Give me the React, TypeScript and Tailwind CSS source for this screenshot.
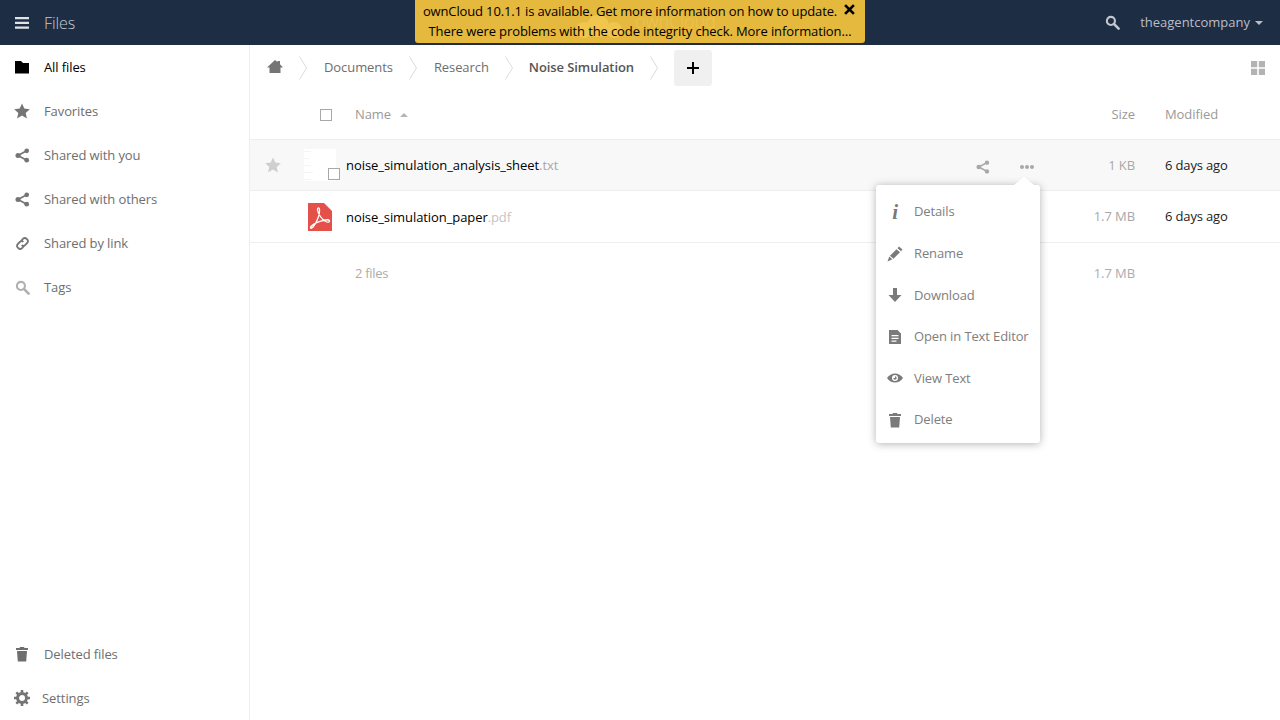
import type { ReactNode } from 'react';

const FONT = "font-['Open_Sans','Noto_Sans',sans-serif]";

type IconProps = { className?: string };

const FolderIcon = ({ className }: IconProps) => (
  <svg viewBox="0 0 16 16" className={className} fill="currentColor">
    <path d="M1 2h6l2 2h6v10.500H1z" />
  </svg>
);
const StarIcon = ({ className }: IconProps) => (
  <svg viewBox="0 0 16 16" className={className} fill="currentColor">
    <path d="M8 .5l2.300 5.100 5.500.6-4.100 3.700 1.200 5.500L8 12.600l-4.900 2.800 1.200-5.500L.2 6.200l5.500-.6z" />
  </svg>
);
const ShareIcon = ({ className }: IconProps) => (
  <svg viewBox="0 0 16 16" className={className} fill="currentColor">
    <circle cx="3.200" cy="8" r="2.700" />
    <circle cx="12.500" cy="3" r="2.500" />
    <circle cx="12.500" cy="13" r="2.500" />
    <path d="M3.200 8l9.300-5M3.200 8l9.300 5" stroke="currentColor" strokeWidth="1.800" fill="none" />
  </svg>
);
const LinkIcon = ({ className }: IconProps) => (
  <svg viewBox="0 0 16 16" className={className} fill="none" stroke="currentColor" strokeWidth="2">
    <path d="M6.500 5.500l1.800-2.300a2.600 2.600 0 0 1 3.900-.3l.8.7a2.600 2.600 0 0 1 .1 3.700l-2.300 2.500a2.600 2.600 0 0 1-3.700 0" />
    <path d="M9.500 10.500l-1.800 2.300a2.600 2.600 0 0 1-3.900.3l-.8-.7a2.600 2.600 0 0 1-.1-3.700l2.300-2.500a2.600 2.600 0 0 1 3.700 0" />
  </svg>
);
const SearchIcon = ({ className }: IconProps) => (
  <svg viewBox="0 0 16 16" className={className} fill="none" stroke="currentColor">
    <circle cx="6.300" cy="6.300" r="4.300" strokeWidth="2.200" />
    <path d="M9.500 9.500l5 5" strokeWidth="2.800" strokeLinecap="round" />
  </svg>
);
const TrashIcon = ({ className }: IconProps) => (
  <svg viewBox="0 0 16 16" className={className} fill="currentColor">
    <path d="M6 1h4l.5 1H14v2H2V2h3.500zM3 5h10l-.8 10.500H3.800z" />
  </svg>
);
const GearIcon = ({ className }: IconProps) => (
  <svg viewBox="0 0 16 16" className={className} fill="none" stroke="currentColor">
    <circle cx="8" cy="8" r="4.500" strokeWidth="3" />
    <path d="M8 0v3M8 13v3M0 8h3M13 8h3M2.300 2.300l2.100 2.100M11.600 11.600l2.100 2.100M2.300 13.700l2.100-2.100M11.600 4.400l2.100-2.100" strokeWidth="2.600" />
  </svg>
);
const HomeIcon = ({ className }: IconProps) => (
  <svg viewBox="0 0 16 16" className={className} fill="currentColor">
    <path d="M8 1l2.500 2V2h2.500v3.300L16 8.500h-2.500V14h-11V8.500H0z" />
  </svg>
);
const Chevron = () => (
  <svg viewBox="0 0 10 24" className="h-6 w-[10px] shrink-0" fill="none" stroke="#dcdcdc" strokeWidth="1">
    <path d="M1.500 .5l7 11.500-7 11.500" />
  </svg>
);
const PdfIcon = () => (
  <svg viewBox="0 0 24 28" className="h-[28px] w-[24px]">
    <path d="M0 0h16l8 8v20H0z" fill="#e4514a" />
    <path
      d="M2.500 25c1.200 1 3.500-1.500 6-6.500 1.800-3.700 3.300-8.500 3-12-.2-2.500-2.300-2-2 .5.500 4 4.500 9.500 8 11.500 2 1 4.500.8 4-.7-.5-1.300-5-1-9.500.5-4 1.300-10 4.700-9.500 6.700z"
      fill="none"
      stroke="#fff"
      strokeWidth="1.300"
    />
  </svg>
);

const MENU: { icon: ReactNode; label: string }[] = [
  {
    icon: <span className="font-['Liberation_Serif',serif] text-[21px] font-bold italic leading-none">i</span>,
    label: 'Details',
  },
  {
    icon: (
      <svg viewBox="0 0 16 16" className="h-4 w-4" fill="currentColor">
        <path d="M12 .5l3.500 3-1.500 1.700-3.500-3zM9.500 3.200l3.500 3-6.500 6.500-3.500-3zM2.300 10.500l3 2.700L.5 15.500z" />
      </svg>
    ),
    label: 'Rename',
  },
  {
    icon: (
      <svg viewBox="0 0 16 16" className="h-4 w-4" fill="currentColor">
        <path d="M6 1h4v7h4.500L8 15 1.500 8H6z" />
      </svg>
    ),
    label: 'Download',
  },
  {
    icon: (
      <svg viewBox="0 0 16 16" className="h-4 w-4" fill="currentColor">
        <path
          fillRule="evenodd"
          d="M2 1h8.500L14 4.500V15H2zM4.500 6v1.200h7V6zm0 2.800V10h7V8.800zm0 2.700v1.200h5v-1.200z"
        />
      </svg>
    ),
    label: 'Open in Text Editor',
  },
  {
    icon: (
      <svg viewBox="0 0 16 16" className="h-4 w-4 -translate-y-px" fill="currentColor">
        <path
          fillRule="evenodd"
          d="M0 8c2-3 5-4.500 8-4.500S14 5 16 8c-2 3-5 4.500-8 4.500S2 11 0 8zm8-3a3 3 0 1 0 0 6 3 3 0 0 0 0-6zm0 1.300a1.700 1.700 0 1 1-1.700 1.700H8z"
        />
      </svg>
    ),
    label: 'View Text',
  },
  { icon: <TrashIcon className="h-4 w-4" />, label: 'Delete' },
];

function NavItem({ icon, label, active }: { icon: ReactNode; label: string; active?: boolean }) {
  return (
    <a className={`flex h-11 items-center text-[13px] tracking-[-0.1px] ${active ? 'text-black' : 'text-[#6e6e6e]'}`}>
      <span className="flex w-11 shrink-0 justify-center">{icon}</span>
      <span className="pt-[2px]">{label}</span>
    </a>
  );
}

function Checkbox({ className }: IconProps) {
  return <span className={`block h-3 w-3 border border-[#a8a8a8] bg-white ${className ?? ''}`} />;
}

export default function App() {
  return (
    <div className={`flex h-[720px] flex-col overflow-hidden bg-white tracking-[-0.08px] ${FONT}`}>
      <header className="relative flex h-[45px] shrink-0 items-center justify-between bg-[#1d2d44]">
        <div className="flex items-center">
          <svg viewBox="0 0 14 12" className="ml-[15px] h-3 w-[14px]" fill="#dfe2e6">
            <path d="M0 0h14v2.200H0zM0 4.800h14V7H0zM0 9.600h14v2.200H0z" />
          </svg>
          <span className="ml-[15px] text-[16px] font-light text-[#c6cbd2]">Files</span>
        </div>
        <div className="flex items-center text-[13px] text-[#b9bec6]">
          <SearchIcon className="h-[15px] w-[15px] text-[#c4c8ce]" />
          <span className="ml-[20px] tracking-normal">theagentcompany</span>
          <span className="ml-[5px] mr-[17px] h-0 w-0 border-x-[4px] border-t-[4px] border-x-transparent border-t-[#b9bec6]" />
        </div>

        <div className="absolute left-[415px] top-0 z-20 h-[43px] w-[450px] rounded-b-[3px] bg-[#e5b83e] text-center text-[13px] leading-[20px] text-black">
          <svg viewBox="0 0 48 23" className="absolute left-[160px] top-[15px] h-[23px] w-[48px]" fill="#f0c64f">
            <circle cx="9" cy="15" r="8" />
            <circle cx="23" cy="11" r="11" />
            <circle cx="39" cy="15" r="8" />
          </svg>
          <span className="absolute left-[220px] top-[11px] text-[18px] font-light text-[#edc452]">ownCloud</span>
          <div className="relative pt-[1px]">
            <div className="pr-[20px] tracking-[-0.14px]">ownCloud 10.1.1 is available. Get more information on how to update.</div>
            <div className="tracking-[-0.11px]">There were problems with the code integrity check. More information…</div>
          </div>
          <svg viewBox="0 0 10 10" className="absolute right-[10px] top-[4px] h-[11px] w-[11px]" stroke="#000" strokeWidth="2.400">
            <path d="M1 1l8 8M9 1l-8 8" />
          </svg>
        </div>
      </header>

      <div className="flex min-h-0 flex-1">
        <aside className="flex w-[250px] shrink-0 flex-col justify-between border-r border-[#eeeeee]">
          <nav>
            <NavItem active label="All files" icon={<FolderIcon className="h-4 w-4 text-black" />} />
            <NavItem label="Favorites" icon={<StarIcon className="h-4 w-4 text-[#757575]" />} />
            <NavItem label="Shared with you" icon={<ShareIcon className="h-[15px] w-[15px] text-[#757575]" />} />
            <NavItem label="Shared with others" icon={<ShareIcon className="h-[15px] w-[15px] text-[#757575]" />} />
            <NavItem label="Shared by link" icon={<LinkIcon className="h-[15px] w-[15px] text-[#757575]" />} />
            <NavItem label="Tags" icon={<SearchIcon className="h-[15px] w-[15px] text-[#b0b0b0]" />} />
          </nav>
          <div>
            <NavItem label="Deleted files" icon={<TrashIcon className="h-4 w-4 text-[#6e6e6e]" />} />
            <a className="flex h-11 items-center text-[13px] text-[#6e6e6e]">
              <span className="flex w-[42px] shrink-0 justify-center pl-[2px]">
                <GearIcon className="h-4 w-4 text-[#757575]" />
              </span>
              <span className="pt-[2px]">Settings</span>
            </a>
          </div>
        </aside>

        <main className="relative min-w-0 flex-1 text-[13px]">
          <div className="flex h-[45px] items-center">
            <HomeIcon className="ml-[17px] h-4 w-4 -translate-y-[1px] text-[#757575]" />
            <span className="ml-[15px]"><Chevron /></span>
            <span className="ml-[16px] text-[#6e6e6e]">Documents</span>
            <span className="ml-[15px]"><Chevron /></span>
            <span className="ml-[16px] text-[#6e6e6e]">Research</span>
            <span className="ml-[15px]"><Chevron /></span>
            <span className="ml-[15px] font-semibold text-[#555555]">Noise Simulation</span>
            <span className="ml-[15px]"><Chevron /></span>
            <button className="ml-[15px] mt-[1px] flex h-9 w-[38px] items-center justify-center rounded-[3px] bg-[#f0f0f0]">
              <svg viewBox="0 0 12 12" className="h-3 w-3" stroke="#000" strokeWidth="2">
                <path d="M6 0v12M0 6h12" />
              </svg>
            </button>
            <svg viewBox="0 0 14 14" className="ml-auto mr-[15px] h-[14px] w-[14px]" fill="#b3b3b3">
              <path d="M0 0h6.200v6.200H0zM7.800 0H14v6.200H7.800zM0 7.800h6.200V14H0zM7.800 7.800H14V14H7.800z" />
            </svg>
          </div>

          <div className="flex h-[50px] items-center border-b border-[#eeeeee] text-[#9a9a9a]">
            <Checkbox className="ml-[70px]" />
            <span className="ml-[23px]">Name</span>
            <span className="ml-[9px] h-0 w-0 border-x-[4px] border-b-[4px] border-x-transparent border-b-[#b5b5b5]" />
            <span className="ml-auto">Size</span>
            <span className="ml-[30px] w-[115px]">Modified</span>
          </div>

          <div className="flex h-[51px] items-center border-b border-[#eeeeee] bg-[#f8f8f8]">
            <StarIcon className="ml-[15px] h-4 w-4 text-[#cfcfcf]" />
            <div className="relative ml-[23px] flex h-8 w-8 shrink-0 flex-col gap-[6px] bg-white pt-[2px]">
              <span className="h-px w-[7px] bg-[#f4f4f4]" />
              <span className="h-px w-[5px] bg-[#f4f4f4]" />
              <span className="h-px w-[7px] bg-[#f4f4f4]" />
              <span className="h-px w-[9px] bg-[#f4f4f4]" />
              <span className="h-px w-[7px] bg-[#f4f4f4]" />
              <Checkbox className="absolute left-6 top-[19px]" />
            </div>
            <span className="ml-[10px] pt-[2px] tracking-[-0.05px] text-black">
              noise_simulation_analysis_sheet<span className="text-[#a8a8a8]">.txt</span>
            </span>
            <ShareIcon className="ml-auto mt-[3px] h-[14px] w-[14px] text-[#a8a8a8]" />
            <svg viewBox="0 0 14 4" className="ml-[30px] mt-[3px] h-1 w-[14px]" fill="#a8a8a8">
              <circle cx="2" cy="2" r="2" />
              <circle cx="7" cy="2" r="2" />
              <circle cx="12" cy="2" r="2" />
            </svg>
            <span className="ml-[74px] pt-[2px] text-[#a8a8a8]">1 KB</span>
            <span className="ml-[30px] w-[115px] pt-[2px] tracking-[-0.15px] text-[#222222]">6 days ago</span>
          </div>

          <div className="flex h-[52px] items-center border-b border-[#eeeeee]">
            <span className="ml-[58px] flex w-6 shrink-0"><PdfIcon /></span>
            <span className="ml-[14px] pt-[2px] text-black">
              noise_simulation_paper<span className="text-[#c4c4c4]">.pdf</span>
            </span>
            <span className="ml-auto text-[#a8a8a8]">1.7 MB</span>
            <span className="ml-[30px] w-[115px] tracking-[-0.15px] text-[#222222]">6 days ago</span>
          </div>

          <div className="flex h-[62px] items-center text-[#ababab]">
            <span className="ml-[105px] tracking-[-0.3px]">2 files</span>
            <span className="ml-auto mr-[145px]">1.7 MB</span>
          </div>

          <div className="absolute left-[626px] top-[140px] z-10 w-[164px] rounded-[3px] bg-white pb-[2px] pt-[6.400px] text-[13px] tracking-[-0.12px] text-[#7e7e7e] shadow-[0_1px_8px_rgba(0,0,0,0.3)]">
            <span className="absolute -top-[8px] left-[138px] h-0 w-0 border-x-[10px] border-b-[8px] border-x-transparent border-b-white" />
            {MENU.map((item) => (
              <div key={item.label} className="flex h-[41.600px] items-center whitespace-nowrap">
                <span className="flex w-[38px] shrink-0 justify-center text-[#7a7a7a]">{item.icon}</span>
                {item.label}
              </div>
            ))}
          </div>
        </main>
      </div>
    </div>
  );
}
